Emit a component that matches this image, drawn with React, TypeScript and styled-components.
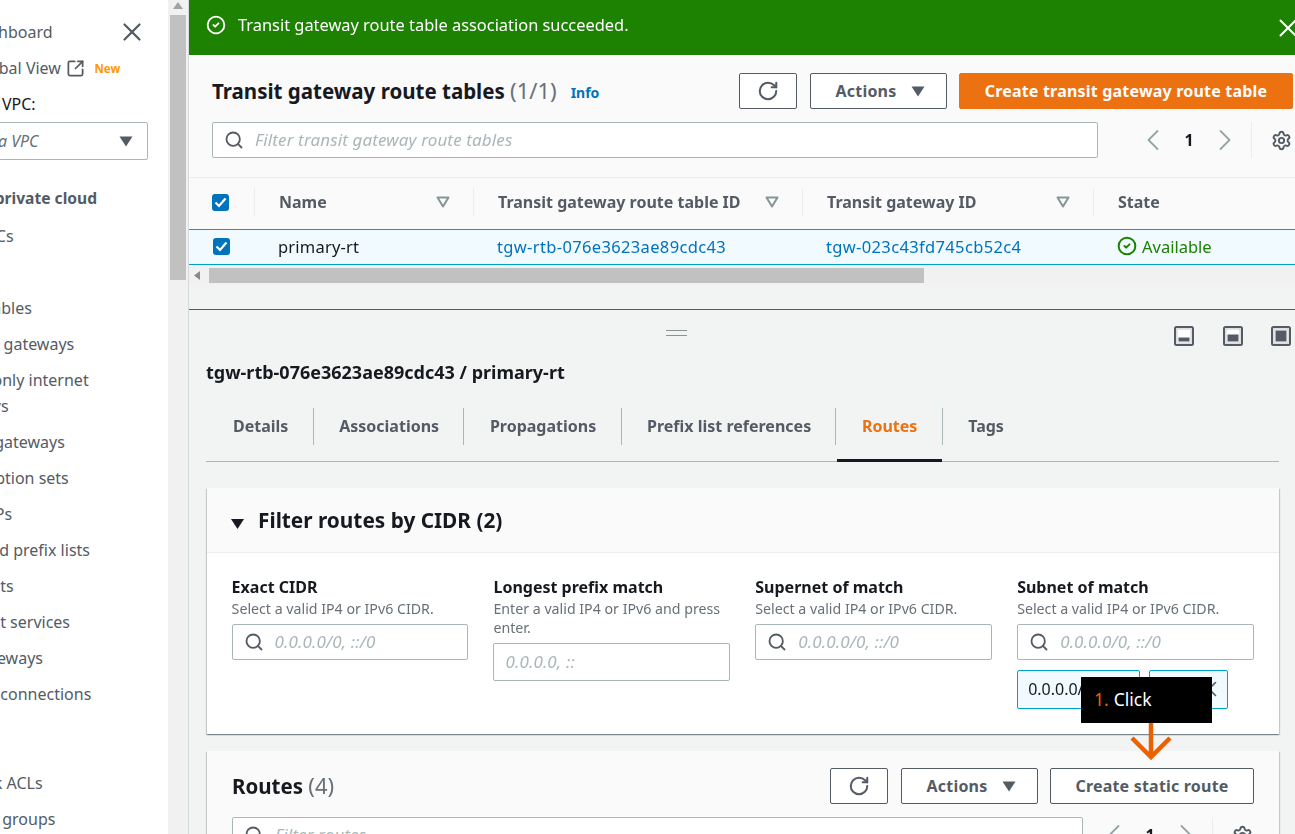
import React from "react";
import styled, { createGlobalStyle } from "styled-components";
import { RotateCw, Search as SearchGlyph, ChevronLeft, ChevronRight, Settings, X, SquareArrowOutUpRight, CircleCheck } from "lucide-react";

const Global = createGlobalStyle`
  html, body { margin: 0; padding: 0; height: 100%; overflow: hidden; background: #f2f3f3; }
  body { font-family: "Noto Sans", "Open Sans", sans-serif; font-size: 16px; color: #16191f; }
  * { box-sizing: border-box; }
`;

const Shell = styled.div`
  position: relative;
  display: flex;
  width: 1295px;
  height: 834px;
  overflow: hidden;
  filter: blur(0.4px);
`;

const Sidebar = styled.aside`
  width: 168px;
  flex: none;
  background: #fff;
  overflow: hidden;
`;
const SideInner = styled.div`
  margin-left: -62px;
  width: 230px;
  padding-top: 20px;
`;
const SideTop = styled.div`
  display: flex;
  align-items: center;
  justify-content: space-between;
  height: 24px;
  padding-right: 21px;
  color: #545b64;
  line-height: 24px;
  font-size: 16px;
  svg { color: #545b64; flex: none; }
`;
const GlobalRow = styled.div`
  display: flex;
  align-items: center;
  height: 24px;
  margin-top: 12px;
  padding-left: 3px;
  color: #545b64;
  svg { margin-left: 5px; }
`;
const NewTag = styled.span`
  margin-left: 9.5px;
  color: #ff9900;
  font-size: 11.5px;
  font-weight: 700;
`;
const FilterLabel = styled.div`
  margin-top: 12px;
  height: 24px;
  line-height: 24px;
  color: #16191f;
`;
const VpcSelect = styled.div`
  display: flex;
  align-items: center;
  justify-content: space-between;
  height: 38px;
  margin-top: 6px;
  width: 210px;
  padding: 0 14px 0 14px;
  border: 1px solid #aab7b8;
  border-radius: 2px;
  color: #687078;
  font-style: italic;
`;
const NavHead = styled.div`
  margin-top: 26px;
  height: 24px;
  line-height: 24px;
  font-size: 15.6px;
  font-weight: 700;
  color: #545b64;
`;
const NavList = styled.div`
  margin-top: 12.5px;
  display: flex;
  flex-direction: column;
  gap: 10px;
`;
const NavItem = styled.div`
  width: 160px;
  line-height: 26px;
  min-height: 26px;
  color: #545b64;
`;
const NavGroup = styled.div`
  margin-top: 63px;
  display: flex;
  flex-direction: column;
  gap: 10px;
`;

const Rail = styled.div`
  width: 20px;
  flex: none;
  background: #f1f1f1;
  display: flex;
  flex-direction: column;
  align-items: center;
`;
const RailArrow = styled.svg`
  margin: 2px 0 6px;
`;
const RailThumb = styled.div`
  width: 16px;
  height: 265px;
  background: #c1c1c1;
`;

const Main = styled.main`
  width: 1107px;
  flex: none;
  overflow: hidden;
  border-left: 1px solid #d5dbdb;
  display: flex;
  flex-direction: column;
`;
const Flash = styled.div`
  flex: none;
  height: 55px;
  margin-left: -1px;
  background: #1d8102;
  color: #fff;
  display: flex;
  align-items: center;
  padding: 0 0 6px 18px;
  font-size: 16.4px;
  svg:first-child { margin-right: 12px; flex: none; }
  span { flex: 1; }
  svg:last-child { margin: 6px -8px 0 0; flex: none; }
`;
const TopPanel = styled.section`
  flex: none;
  background: #fafafa;
  padding: 18px 2px 19px 23px;
`;
const TitleRow = styled.div`
  display: flex;
  align-items: center;
  height: 36px;
`;
const Title = styled.h2<{ $size?: number; $lift?: number }>`
  margin: 0 0 ${(p) => p.$lift ?? 3}px;
  font-size: ${(p) => p.$size ?? 20.5}px;
  font-weight: 700;
  color: #16191f;
  white-space: nowrap;
  span { font-size: 22px; font-weight: 400; color: #687078; }
`;
const Info = styled.a`
  margin: 3px 0 0 14px;
  color: #0073bb;
  font-size: 14px;
  font-weight: 700;
`;
const Actions = styled.div`
  margin-left: auto;
  display: flex;
  gap: 12.5px;
`;
const Button = styled.button<{ $w: number; $primary?: boolean; $nudge?: number }>`
  display: flex;
  align-items: center;
  justify-content: center;
  gap: 15px;
  width: ${(p) => p.$w}px;
  height: 36px;
  padding: 0 0 0 ${(p) => p.$nudge ?? 0}px;
  border: 1px solid ${(p) => (p.$primary ? "#ec7211" : "#545b64")};
  border-radius: 2px;
  background: ${(p) => (p.$primary ? "#ec7211" : "#fff")};
  color: ${(p) => (p.$primary ? "#fff" : "#545b64")};
  font: 700 16px "Noto Sans", sans-serif;
  letter-spacing: 0.2px;
  white-space: nowrap;
`;
const FilterRow = styled.div`
  display: flex;
  align-items: center;
  margin-top: 13px;
  margin-right: 1px;
`;
const SearchBox = styled.label`
  flex: 1;
  display: flex;
  align-items: center;
  height: 36px;
  padding-left: 11px;
  gap: 11px;
  background: #fff;
  border: 1px solid #aab7b8;
  border-radius: 2px;
  color: #545b64;
  min-width: 0;
`;
const Field = styled.input`
  flex: 1;
  min-width: 0;
  border: 0;
  outline: 0;
  background: transparent;
  padding: 0 0 2px;
  font: 400 17px "Noto Sans", sans-serif;
  letter-spacing: 0.13px;
  &::placeholder { color: #aab7b8; font-style: italic; opacity: 1; }
`;
const PlainField = styled(Field)`
  flex: none;
  display: block;
  width: 100%;
  height: 38px;
  margin-top: 6px;
  padding: 0 0 2px 11px;
  background: #fff;
  border: 1px solid #aab7b8;
  border-radius: 2px;
`;
const Pager = styled.div<{ $inset: number }>`
  flex: none;
  display: flex;
  align-items: center;
  margin-left: ${(p) => p.$inset}px;
`;
const PageCell = styled.div`
  width: 36px;
  height: 36px;
  display: flex;
  align-items: center;
  justify-content: center;
  color: #16191f;
  font-weight: 700;
  svg { color: #95a5a6; flex: none; }
`;
const PageRule = styled.div`
  width: 1px;
  height: 36px;
  background: #eaeded;
  margin: 0 19px 0 8px;
`;
const GearIcon = styled(Settings)`
  color: #545b64;
`;

const TableGrid = styled.div<{ $selected?: boolean }>`
  flex: none;
  display: grid;
  grid-template-columns: 66px 219px 329px 291px 202px;
  width: 1107px;
  margin-left: -1px;
  height: ${(p) => (p.$selected ? 36 : 52)}px;
  padding-bottom: 2px;
  align-items: center;
  background: ${(p) => (p.$selected ? "#f1faff" : "#fafafa")};
  border-top: 1px solid ${(p) => (p.$selected ? "#00a1c9" : "#eaeded")};
  border-bottom: 1px solid ${(p) => (p.$selected ? "#00a1c9" : "transparent")};
  border-left: ${(p) => (p.$selected ? "1px solid #00a1c9" : "0")};
`;
const HeadCell = styled.div`
  display: flex;
  align-items: center;
  justify-content: space-between;
  height: 28px;
  padding: 0 23px 0 24px;
  border-left: 1px solid #eaeded;
  color: #545b64;
  font-weight: 700;
  white-space: nowrap;
`;
const CheckCell = styled.div`
  display: flex;
  align-items: center;
  padding-left: 24px;
`;
const Check = styled.span`
  display: flex;
  align-items: center;
  justify-content: center;
  width: 17px;
  height: 17px;
  border-radius: 3px;
  background: #0073bb;
  svg { display: block; }
`;
const Cell = styled.div`
  padding-left: 23px;
  color: #16191f;
  white-space: nowrap;
  font-size: 16.5px;
  letter-spacing: 0.2px;
`;
const LinkCell = styled(Cell)`
  color: #0073bb;
  letter-spacing: 0.35px;
`;
const StateCell = styled(Cell)`
  display: flex;
  align-items: center;
  gap: 5px;
  letter-spacing: 0;
  color: #1d8102;
  svg { flex: none; }
`;
const HBar = styled.div`
  flex: none;
  height: 20px;
  margin-left: -1px;
  background: #f1f1f1;
  display: flex;
  align-items: center;
  padding-left: 6px;
`;
const HThumb = styled.div`
  width: 715px;
  height: 15px;
  margin-left: 9px;
  background: #c1c1c1;
`;
const Gap = styled.div`
  flex: none;
  height: 25px;
  border-bottom: 1px solid #545b64;
  margin-left: -1px;
  background: #f2f3f3;
`;

const Split = styled.section`
  flex: 1;
  background: #f2f3f3;
  padding-left: 17px;
`;
const SplitBar = styled.div`
  display: flex;
  align-items: center;
  height: 50px;
  padding: 0 4px 0 460px;
`;
const Handle = styled.div`
  width: 21px;
  height: 6px;
  margin-top: -4px;
  border-top: 1px solid #879596;
  border-bottom: 1px solid #879596;
`;
const SplitIcons = styled.div`
  margin-left: auto;
  margin-top: 2px;
  display: flex;
  gap: 28.5px;
`;
const SplitTitle = styled.h3`
  margin: 0;
  font-size: 18px;
  line-height: 24px;
  font-weight: 700;
  color: #16191f;
  white-space: nowrap;
`;
const Tabs = styled.div`
  display: flex;
  width: 1073px;
  margin-top: 24px;
  padding-bottom: 16px;
  border-bottom: 1px solid #aab7b8;
`;
const Tab = styled.div<{ $active?: boolean; $last?: boolean }>`
  position: relative;
  height: 37px;
  line-height: 36px;
  padding: 0 24.3px 0 25.5px;
  border-right: ${(p) => (p.$last ? "0" : "1px solid #aab7b8")};
  color: ${(p) => (p.$active ? "#ec7211" : "#545b64")};
  font-weight: 700;
  white-space: nowrap;
  &:first-child { padding-left: 27px; }
  ${(p) =>
    p.$active &&
    `&::after { content: ""; position: absolute; left: 1px; right: 0; bottom: -17px; height: 3px; background: #16191f; }`}
`;
const Card = styled.div<{ $gap: number }>`
  width: 1072px;
  margin: ${(p) => p.$gap}px 0 0 1px;
  background: #fff;
  box-shadow: 0 1px 1px 0 rgba(0, 28, 36, 0.3), 1px 1px 1px 0 rgba(0, 28, 36, 0.15), -1px 1px 1px 0 rgba(0, 28, 36, 0.15);
`;
const CardHead = styled.div`
  display: flex;
  align-items: center;
  height: 65px;
  padding: 0 0 1px 24px;
  gap: 14px;
  background: #fafafa;
  border-bottom: 1px solid #eaeded;
`;
const Caret = styled.svg`
  margin-top: 8px;
`;
const CardBody = styled.div`
  display: grid;
  grid-template-columns: repeat(4, minmax(0, 1fr));
  gap: 25px;
  padding: 23px 25px 25px 24.6px;
`;
const Label = styled.div`
  font-weight: 700;
  font-size: 16px;
  line-height: 22px;
  color: #16191f;
  white-space: nowrap;
`;
const Desc = styled.div`
  margin-top: 1px;
  font-size: 14.2px;
  line-height: 19px;
  color: #687078;
`;
const InputSlot = styled.div`
  margin-top: 6px;
`;
const Tokens = styled.div`
  display: flex;
  gap: 9px;
  margin-top: 10px;
`;
const Token = styled.div<{ $w: number }>`
  display: flex;
  align-items: center;
  justify-content: space-between;
  width: ${(p) => p.$w}px;
  height: 39px;
  padding: 0 5px 2px 10px;
  background: #f1faff;
  border: 1px solid #00a1c9;
  border-radius: 2px;
  color: #16191f;
  svg { color: #545b64; flex: none; }
`;
const RoutesHead = styled.div`
  padding: 17px 25px 0;
  background: #fafafa;
  height: 120px;
`;

const Tooltip = styled.div`
  position: absolute;
  left: 1081px;
  top: 677px;
  width: 131px;
  height: 46px;
  padding: 0 0 3px 13px;
  display: flex;
  align-items: center;
  gap: 5px;
  background: #000;
  color: #fff;
  font-size: 17.5px;
  span { color: #eb6100; }
`;
const Arrow = styled.svg`
  position: absolute;
  left: 1127px;
  top: 723px;
`;

const navItems = ["Your VPCs", "Subnets", "Route tables", "Internet gateways", "Egress-only internet gateways", "Carrier gateways", "DHCP option sets", "Elastic IPs", "Managed prefix lists", "Endpoints", "Endpoint services", "NAT gateways", "Peering connections"];

const Sort = () => (
  <svg width="14" height="12" viewBox="0 0 14 12" fill="none"><path d="M1.5 1.5h11L7 10.5z" stroke="#879596" strokeWidth="2" strokeLinejoin="round" /></svg>
);
const Tick = () => (
  <svg width="13" height="11" viewBox="0 0 13 11" fill="none"><path d="M1.5 5.5L5 9l6.5-7.5" stroke="#fff" strokeWidth="2.2" /></svg>
);
const Down = () => (
  <svg width="14" height="11" viewBox="0 0 14 11"><path d="M0.5 0.5h13L7 10.5z" fill="#545b64" /></svg>
);
const PanelIcon = ({ fill }: { fill: number }) => (
  <svg width="20" height="20" viewBox="0 0 20 20" fill="none">
    <rect x="1" y="1" width="18" height="18" rx="1.5" stroke="#545b64" strokeWidth="2" />
    <rect x="3" y="3" width="14" height="14" fill="#fff" stroke="#aab0b6" strokeWidth="0.6" />
    <rect x="4.5" y={15.5 - fill} width="11" height={fill} fill="#545b64" />
  </svg>
);
const Pagination = ({ inset }: { inset: number }) => (
  <Pager $inset={inset}>
    <PageCell><ChevronLeft size={36} strokeWidth={1.2} /></PageCell>
    <PageCell>1</PageCell>
    <PageCell><ChevronRight size={36} strokeWidth={1.2} /></PageCell>
    <PageRule />
    <GearIcon size={21} strokeWidth={2.2} />
  </Pager>
);

const cidr = [
  { label: "Exact CIDR", desc: "Select a valid IP4 or IPv6 CIDR." },
  { label: "Longest prefix match", desc: "Enter a valid IP4 or IPv6 and press enter." },
  { label: "Supernet of match", desc: "Select a valid IP4 or IPv6 CIDR." },
  { label: "Subnet of match", desc: "Select a valid IP4 or IPv6 CIDR." },
];

export default function App() {
  return (
    <Shell>
      <Global />
      <Sidebar>
        <SideInner>
          <SideTop>VPC dashboard<X size={30} strokeWidth={1.8} /></SideTop>
          <GlobalRow>EC2 Global View<SquareArrowOutUpRight size={19} strokeWidth={2.2} /><NewTag>New</NewTag></GlobalRow>
          <FilterLabel>Filter by VPC:</FilterLabel>
          <VpcSelect>Select a VPC<Down /></VpcSelect>
          <NavHead>Virtual private cloud</NavHead>
          <NavList>
            {navItems.map((n) => <NavItem key={n}>{n}</NavItem>)}
          </NavList>
          <NavGroup>
            <NavItem>Network ACLs</NavItem>
            <NavItem>Security groups</NavItem>
          </NavGroup>
        </SideInner>
      </Sidebar>
      <Rail>
        <RailArrow width="10" height="7" viewBox="0 0 10 7"><path d="M5 0l5 7H0z" fill="#a3a3a3" /></RailArrow>
        <RailThumb />
      </Rail>
      <Main>
        <Flash>
          <CircleCheck size={20} strokeWidth={2.2} />
          <span>Transit gateway route table association succeeded.</span>
          <X size={30} strokeWidth={1.6} />
        </Flash>
        <TopPanel>
          <TitleRow>
            <Title>Transit gateway route tables <span>(1/1)</span></Title>
            <Info>Info</Info>
            <Actions>
              <Button $w={58}><RotateCw size={22} strokeWidth={2.2} /></Button>
              <Button $w={137} $nudge={5}>Actions<Down /></Button>
              <Button $w={334} $primary>Create transit gateway route table</Button>
            </Actions>
          </TitleRow>
          <FilterRow>
            <SearchBox>
              <SearchGlyph size={20} strokeWidth={2.2} />
              <Field readOnly placeholder="Filter transit gateway route tables" />
            </SearchBox>
            <Pagination inset={37} />
          </FilterRow>
        </TopPanel>
        <TableGrid>
          <CheckCell><Check><Tick /></Check></CheckCell>
          <HeadCell>Name<Sort /></HeadCell>
          <HeadCell>Transit gateway route table ID<Sort /></HeadCell>
          <HeadCell>Transit gateway ID<Sort /></HeadCell>
          <HeadCell>State</HeadCell>
        </TableGrid>
        <TableGrid $selected>
          <CheckCell><Check><Tick /></Check></CheckCell>
          <Cell>primary-rt</Cell>
          <LinkCell>tgw-rtb-076e3623ae89cdc43</LinkCell>
          <LinkCell>tgw-023c43fd745cb52c4</LinkCell>
          <StateCell><CircleCheck size={20} strokeWidth={2.4} />Available</StateCell>
        </TableGrid>
        <HBar>
          <svg width="6" height="9" viewBox="0 0 6 9"><path d="M6 0v9L0 4.5z" fill="#8a8a8a" /></svg>
          <HThumb />
        </HBar>
        <Gap />
        <Split>
          <SplitBar>
            <Handle />
            <SplitIcons>
              <PanelIcon fill={4} />
              <PanelIcon fill={7} />
              <PanelIcon fill={11} />
            </SplitIcons>
          </SplitBar>
          <SplitTitle>tgw-rtb-076e3623ae89cdc43 / primary-rt</SplitTitle>
          <Tabs>
            <Tab>Details</Tab>
            <Tab>Associations</Tab>
            <Tab>Propagations</Tab>
            <Tab>Prefix list references</Tab>
            <Tab $active>Routes</Tab>
            <Tab $last>Tags</Tab>
          </Tabs>
          <Card $gap={26}>
            <CardHead>
              <Caret width="13" height="10" viewBox="0 0 13 10"><path d="M0 0h13L6.5 10z" fill="#16191f" /></Caret>
              <Title $size={20.8} $lift={0}>Filter routes by CIDR (2)</Title>
            </CardHead>
            <CardBody>
              {cidr.map((c, i) => (
                <div key={c.label}>
                  <Label>{c.label}</Label>
                  <Desc>{c.desc}</Desc>
                  {i === 1 ? (
                    <PlainField readOnly placeholder="0.0.0.0, ::" />
                  ) : (
                    <InputSlot>
                      <SearchBox>
                        <SearchGlyph size={20} strokeWidth={2.2} />
                        <Field readOnly placeholder="0.0.0.0/0, ::/0" />
                      </SearchBox>
                    </InputSlot>
                  )}
                  {i === 3 && (
                    <Tokens>
                      <Token $w={123}>0.0.0.0/0</Token>
                      <Token $w={79}>::/0<X size={26} strokeWidth={1.5} /></Token>
                    </Tokens>
                  )}
                </div>
              ))}
            </CardBody>
          </Card>
          <Card $gap={17}>
            <RoutesHead>
              <TitleRow>
                <Title>Routes <span>(4)</span></Title>
                <Actions>
                  <Button $w={58}><RotateCw size={22} strokeWidth={2.2} /></Button>
                  <Button $w={137} $nudge={5}>Actions<Down /></Button>
                  <Button $w={204}>Create static route</Button>
                </Actions>
              </TitleRow>
              <FilterRow>
                <SearchBox>
                  <SearchGlyph size={20} strokeWidth={2.2} />
                  <Field readOnly placeholder="Filter routes" />
                </SearchBox>
                <Pagination inset={13} />
              </FilterRow>
            </RoutesHead>
          </Card>
        </Split>
      </Main>
      <Tooltip><span>1.</span> Click</Tooltip>
      <Arrow width="48" height="38" viewBox="0 0 48 38" fill="none">
        <path d="M24 0v33M5 15l19 19 19-19" stroke="#eb6100" strokeWidth="4.5" />
      </Arrow>
    </Shell>
  );
}
